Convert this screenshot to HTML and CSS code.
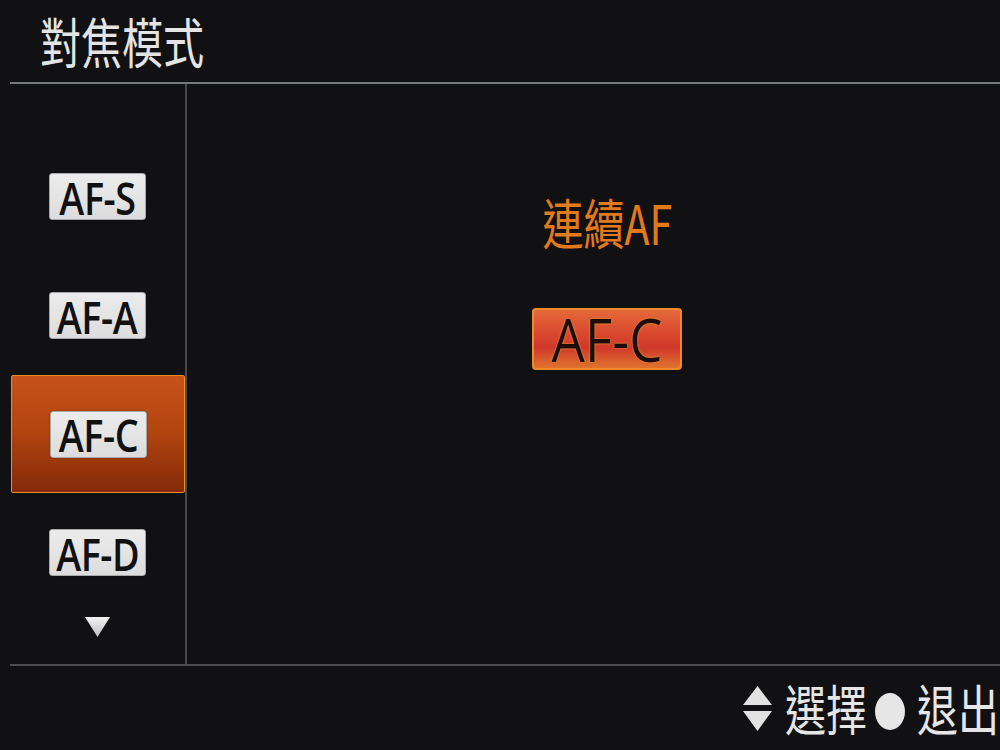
FILE: index.html
```html
<!DOCTYPE html>
<html lang="zh-Hant">
<head>
<meta charset="utf-8">
<title>對焦模式</title>
<link rel="stylesheet" href="styles.css">
</head>
<body>
<div class="screen">
  <header class="header">
    <h1 class="title"><span class="cjk-squeeze">對焦模式</span></h1>
  </header>
  <div class="main">
    <nav class="menu">
      <div class="row"><span class="tag"><span class="tag-text">AF-S</span></span></div>
      <div class="row"><span class="tag"><span class="tag-text">AF-A</span></span></div>
      <div class="row selected"><span class="tag"><span class="tag-text">AF-C</span></span></div>
      <div class="row"><span class="tag"><span class="tag-text">AF-D</span></span></div>
      <div class="more">
        <svg width="25" height="20" viewBox="0 0 25 20"><defs><linearGradient id="tg" x1="0" y1="0" x2="0" y2="1"><stop offset="0" stop-color="#f2f2f2"/><stop offset="1" stop-color="#bdbdbd"/></linearGradient></defs><polygon points="0,0 25,0 12.5,20" fill="url(#tg)"/></svg>
      </div>
    </nav>
    <section class="detail">
      <div class="mode-name"><span class="cjk-squeeze center">連續AF</span></div>
      <div class="big-tag"><span class="big-tag-text">AF-C</span></div>
    </section>
  </div>
  <footer class="footer">
    <svg class="updown" width="29" height="45" viewBox="0 0 29 45"><polygon points="14.5,0 29,19 0,19" fill="#e2e2e2"/><polygon points="0,25 29,25 14.5,45" fill="#e2e2e2"/></svg>
    <span class="label sel"><span class="cjk-squeeze">選擇</span></span>
    <span class="dot"></span>
    <span class="label exit"><span class="cjk-squeeze">退出</span></span>
  </footer>
</div>
</body>
</html>
```

FILE: styles.css
```css
* { box-sizing: border-box; }
html, body {
  margin: 0;
  padding: 0;
  background: #111113;
}
body {
  width: 1000px;
  height: 750px;
  overflow: hidden;
  font-family: "Noto Sans CJK TC", "Noto Sans", sans-serif;
  color: #e4e4e4;
}
.screen {
  width: 1000px;
  height: 750px;
  display: flex;
  flex-direction: column;
}
.header {
  height: 84px;
  margin-left: 10px;
  padding-left: 30px;
  border-bottom: 2px solid #767a76;
  display: flex;
  align-items: center;
}
.title {
  margin: 0;
  font-size: 54px;
  font-weight: 400;
  line-height: 1;
  white-space: nowrap;
}
.cjk-squeeze {
  display: inline-block;
  transform: scaleX(0.76);
  transform-origin: left center;
  white-space: nowrap;
}
.cjk-squeeze.center { transform-origin: center center; }

.main {
  height: 580px;
  margin-left: 10px;
  display: flex;
}
.menu {
  width: 177px;
  border-right: 2px solid #4a4a4c;
  padding-top: 53px;
  display: flex;
  flex-direction: column;
}
.row {
  height: 119px;
  display: flex;
  align-items: center;
  justify-content: center;
}
.row.selected {
  margin-left: 1px;
  width: 174px;
  height: 118px;
  border: 1.5px solid #e98e22;
  border-radius: 2px;
  background: linear-gradient(#c6521a 0%, #b5450f 45%, #842a0a 100%);
}
.tag {
  width: 97px;
  height: 47px;
  background: linear-gradient(#ececec, #dcdcdc);
  border: 1px solid #a8a8a8;
  border-radius: 3px;
  display: flex;
  align-items: center;
  justify-content: center;
  box-shadow: 0 0 1px #000;
  white-space: nowrap;
}
.tag-text {
  font-family: "Open Sans", "Noto Sans", sans-serif;
  font-size: 46px;
  font-weight: 600;
  line-height: 1;
  color: #111;
  display: inline-block;
  white-space: nowrap;
  transform: scaleX(0.82);
  letter-spacing: -0.5px;
}
.more {
  margin-top: 5px;
  display: flex;
  justify-content: center;
}
.more svg { display: block; }

.detail {
  flex: 1;
  padding-top: 111px;
  padding-left: 27px;
  display: flex;
  flex-direction: column;
  align-items: center;
}
.mode-name {
  font-size: 54px;
  line-height: 54px;
  height: 54px;
  color: #e27a1c;
  display: flex;
  justify-content: center;
}
.big-tag {
  margin-top: 59px;
  width: 150px;
  height: 62px;
  border: 2px solid #ee8a2c;
  border-radius: 4px;
  background: linear-gradient(#e4693a 0%, #d8452c 45%, #d0382a 65%, #e0732e 100%);
  display: flex;
  align-items: center;
  justify-content: center;
  white-space: nowrap;
}
.big-tag-text {
  font-family: "Open Sans", "Noto Sans", sans-serif;
  font-size: 60px;
  font-weight: 500;
  line-height: 1;
  color: #1e0c0a;
  display: inline-block;
  white-space: nowrap;
  transform: scaleX(0.88);
  text-shadow: 0 0 2px #f39a3a, 0 0 1px #f39a3a;
}

.footer {
  flex: 1;
  margin-left: 10px;
  border-top: 2px solid #4e4e50;
  display: flex;
  align-items: center;
  justify-content: flex-end;
}
.updown { display: block; margin-right: 13px; }
.label {
  display: inline-block;
  font-size: 54px;
  line-height: 1;
  color: #e6e6e6;
}
.label.sel { width: 80px; margin-right: 10px; }
.label.exit { width: 83px; }
.dot {
  width: 30px;
  height: 37px;
  border-radius: 50%;
  background: #e6e6e6;
  margin-right: 12px;
  margin-top: 6px;
}
```
